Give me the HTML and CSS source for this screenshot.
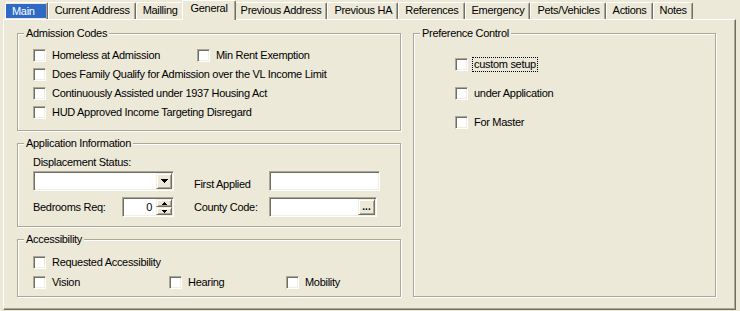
FILE: index.html
```html
<!DOCTYPE html>
<html lang="en">
<head>
    <meta charset="UTF-8">
    <title>General</title>
    <link rel="stylesheet" href="styles.css">
</head>
<body>
    <div class="tabs">
        <div class="tab main"><span class="tab-focus">Main</span></div>
        <div class="tab">Current Address</div>
        <div class="tab">Mailling</div>
        <div class="tab active">General</div>
        <div class="tab">Previous Address</div>
        <div class="tab">Previous HA</div>
        <div class="tab">References</div>
        <div class="tab">Emergency</div>
        <div class="tab">Pets/Vehicles</div>
        <div class="tab">Actions</div>
        <div class="tab">Notes</div>
    </div>
    <div class="page">
        <div class="left-col">
            <fieldset class="group admission">
                <legend>Admission Codes</legend>
                <div class="group-body">
                    <div class="check-row">
                        <label class="check first"><span class="box"></span><span>Homeless at Admission</span></label>
                        <label class="check"><span class="box"></span><span>Min Rent Exemption</span></label>
                    </div>
                    <label class="check"><span class="box"></span><span>Does Family Qualify for Admission over the VL Income Limit</span></label>
                    <label class="check"><span class="box"></span><span>Continuously Assisted under 1937 Housing Act</span></label>
                    <label class="check"><span class="box"></span><span>HUD Approved Income Targeting Disregard</span></label>
                </div>
            </fieldset>
            <fieldset class="group application">
                <legend>Application Information</legend>
                <div class="group-body app-grid">
                    <div class="field-label span-all">Displacement Status:</div>
                    <div class="textbox combo">
                        <span class="btn drop"><svg width="7" height="4" viewBox="0 0 7 4"><path d="M0 0h7v1H0zM1 1h5v1H1zM2 2h3v1H2zM3 3h1v1H3z"/></svg></span>
                    </div>
                    <div class="field-label">First Applied</div>
                    <div class="textbox date"></div>
                    <div class="bedrooms">
                        <span>Bedrooms Req:</span>
                        <div class="textbox spin">
                            <span class="spin-value">0</span>
                            <span class="spin-btns">
                                <span class="btn"><svg width="5" height="3" viewBox="0 0 5 3"><path d="M2 0h1v1H2zM1 1h3v1H1zM0 2h5v1H0z"/></svg></span>
                                <span class="btn"><svg width="5" height="3" viewBox="0 0 5 3"><path d="M0 0h5v1H0zM1 1h3v1H1zM2 2h1v1H2z"/></svg></span>
                            </span>
                        </div>
                    </div>
                    <div class="field-label">County Code:</div>
                    <div class="textbox county">
                        <span class="btn dots">...</span>
                    </div>
                </div>
            </fieldset>
            <fieldset class="group access">
                <legend>Accessibility</legend>
                <div class="group-body">
                    <label class="check"><span class="box"></span><span>Requested Accessibility</span></label>
                    <div class="check-row access-row">
                        <label class="check"><span class="box"></span><span>Vision</span></label>
                        <label class="check"><span class="box"></span><span>Hearing</span></label>
                        <label class="check"><span class="box"></span><span>Mobility</span></label>
                    </div>
                </div>
            </fieldset>
        </div>
        <fieldset class="group preference">
            <legend>Preference Control</legend>
            <div class="group-body pref-body">
                <label class="check"><span class="box"></span><span class="focused">custom setup</span></label>
                <label class="check"><span class="box"></span><span class="pref-text">under Application</span></label>
                <label class="check"><span class="box"></span><span class="pref-text">For Master</span></label>
            </div>
        </fieldset>
    </div>
</body>
</html>
```

FILE: styles.css
```css
body {
    margin: 0;
    background-color: #ece9d8;
    font-family: "Liberation Sans", Arial, sans-serif;
    font-size: 11px;
    letter-spacing: -0.3px;
    color: #000;
}
.tabs {
    display: flex;
    align-items: flex-end;
    height: 19px;
    padding-left: 5px;
}
.tab {
    box-sizing: border-box;
    height: 17px;
    padding: 0 5px 0 6px;
    line-height: 15px;
    white-space: nowrap;
    background-color: #ece9d8;
    border-top: 1px solid #fff;
    border-left: 1px solid #fff;
    border-right: 1px solid #716f64;
    border-radius: 2px 2px 0 0;
    box-shadow: inset -1px 0 0 #aca899;
}
.tab.main {
    padding: 0 1px 0 0;
}
.tab-focus {
    display: block;
    height: 14px;
    margin-top: 1px;
    line-height: 14px;
    padding: 0 11px 0 6px;
    background-color: #316ac5;
    color: #fff;
}
.tab.active {
    position: relative;
    z-index: 1;
    height: 20px;
    margin: 0 -2px -1px;
    padding: 0 7px 0 8px;
}
.page {
    box-sizing: border-box;
    width: 733px;
    height: 291px;
    margin-left: 3px;
    padding: 7px 0 0 13px;
    display: flex;
    gap: 12px;
    border: 1px solid;
    border-color: #fff #716f64 #716f64 #fff;
    box-shadow: inset -1px -1px 0 #aca899;
}
.left-col {
    display: flex;
    flex-direction: column;
    gap: 6px;
    width: 384px;
}
.group {
    box-sizing: border-box;
    margin: 0;
    padding: 0;
    min-width: 0;
    border: 1px solid #aca899;
    box-shadow: 1px 1px 0 #fff, inset 1px 1px 0 #fff;
}
.group legend {
    margin-left: 6px;
    padding: 0 2px;
    line-height: 13px;
    background-color: #ece9d8;
}
.admission { height: 104px; }
.application { height: 90px; }
.access { height: 64px; }
.preference {
    width: 303px;
    height: 270px;
}
.group-body {
    padding: 6px 0 0 15px;
}
.check {
    display: flex;
    align-items: center;
    gap: 6px;
    height: 20px;
    white-space: nowrap;
}
.admission .check {
    height: 19px;
}
.check span:last-child {
    line-height: 13px;
}
.box {
    box-sizing: border-box;
    flex: none;
    width: 13px;
    height: 13px;
    background-color: #fff;
    border: 1px solid;
    border-color: #aca899 #fff #fff #aca899;
    box-shadow: inset 1px 1px 0 #716f64, inset -1px -1px 0 #f1efe2;
}
.check-row {
    display: flex;
}
.check.first {
    width: 164px;
}
.access-row {
    display: grid;
    grid-template-columns: 136px 117px auto;
}
.pref-body {
    display: flex;
    flex-direction: column;
    gap: 9px;
    padding: 14px 0 0 41px;
}
.pref-body .check {
    gap: 5px;
}
.pref-text,
.focused {
    padding: 0 1px;
}
.focused {
    outline: 1px dotted #000;
}
.app-grid {
    display: grid;
    grid-template-columns: 141px 75px 111px;
    column-gap: 20px;
}
.app-grid .textbox.date,
.app-grid .textbox.county {
    margin-left: -20px;
}
.span-all {
    grid-column: 1 / -1;
    line-height: 13px;
    margin-bottom: 2px;
}
.field-label {
    display: flex;
    align-items: center;
    white-space: nowrap;
}
.textbox {
    box-sizing: border-box;
    height: 20px;
    padding: 1px;
    display: flex;
    justify-content: flex-end;
    background-color: #fff;
    border: 1px solid;
    border-color: #aca899 #fff #fff #aca899;
    box-shadow: inset 1px 1px 0 #716f64, inset -1px -1px 0 #f1efe2;
}
.combo {
    margin-bottom: 6px;
}
.textbox.date {
    width: 111px;
}
.textbox.county {
    width: 108px;
}
.btn {
    box-sizing: border-box;
    display: flex;
    align-items: center;
    justify-content: center;
    background-color: #ece9d8;
    border: 1px solid;
    border-color: #f1efe2 #716f64 #716f64 #f1efe2;
    box-shadow: inset 1px 1px 0 #fff, inset -1px -1px 0 #aca899;
}
.drop {
    width: 16px;
    height: 16px;
}
.dots {
    width: 17px;
    height: 16px;
    line-height: 10px;
    letter-spacing: 0;
    font-weight: bold;
    font-size: 10px;
}
.bedrooms {
    display: flex;
    align-items: center;
    justify-content: space-between;
}
.textbox.spin {
    width: 52px;
    align-items: center;
}
.spin-value {
    margin-right: 4px;
    line-height: 13px;
}
.spin-btns {
    display: flex;
    flex-direction: column;
    align-self: stretch;
}
.spin-btns .btn {
    width: 16px;
    height: 8px;
}
```
